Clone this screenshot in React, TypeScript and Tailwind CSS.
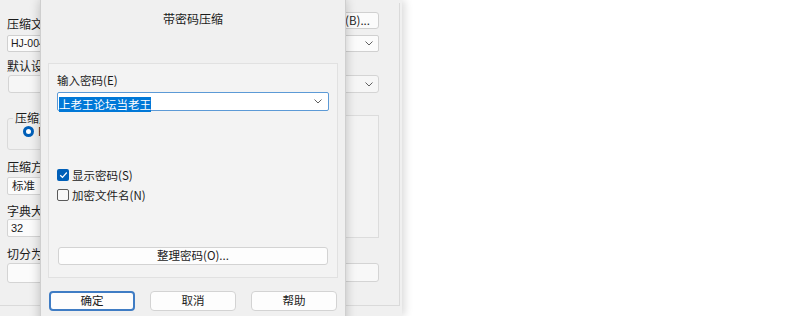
import React from "react";

const Chevron = () => (
  <svg width="8" height="5" viewBox="0 0 8 5" className="shrink-0">
    <path d="M0.5 0.5 L4 4 L7.5 0.5" fill="none" stroke="#606060" strokeWidth="1" />
  </svg>
);

const Check = () => (
  <svg width="9" height="8" viewBox="0 0 9 8">
    <path d="M1.2 4.2 L3.5 6.3 L7.8 1.5" fill="none" stroke="#ffffff" strokeWidth="1.2" />
  </svg>
);

function BackgroundWindow() {
  return (
    <div className="absolute left-0 top-0 w-[402px] h-[316px] bg-[#f0f0f0] shadow-[3px_0_8px_rgba(0,0,0,0.14)]">
      <div className="mt-[3px] w-[400px] h-[303px] border-r border-b border-[#dadada] pl-[7px] pr-[20px] flex flex-col">
        <div className="mt-[9px] h-[17px] flex justify-between items-start">
          <div className="pt-[6px] leading-[12px] text-[12px]">压缩文件名(A)</div>
          <div className="w-[80px] h-[17px] rounded-[3px] border border-[#d0d0d0] bg-[#fbfbfb] flex items-center justify-end pr-[8px] text-[11.5px] leading-none">浏览(B)...</div>
        </div>
        <div className="mt-[6px] h-[17px] border border-[#d0d0d0] bg-[#fbfbfb] rounded-[2px] flex items-center pl-[3px] pr-[5px] text-[10.5px]">
          <span className="flex-1 font-['Liberation_Sans',sans-serif]">HJ-004.rar</span>
          <Chevron />
        </div>
        <div className="mt-[8px] leading-[12px] text-[12px]">默认设置</div>
        <div className="mt-[3px] ml-[1px] h-[18px] border border-[#d4d4d4] bg-[#f6f6f6] rounded-[3px] flex items-center justify-end pr-[5px]">
          <Chevron />
        </div>
        <div className="mt-[19px] flex gap-[14px]">
          <div className="w-[185px] flex flex-col">
            <fieldset className="h-[38px] border border-[#dadada] rounded-[3px]">
              <legend className="ml-[5px] px-[2px] leading-[12px] text-[12px]">压缩文件格式</legend>
              <div className="mt-[2px] pl-[15px] flex items-center gap-[4px] text-[11.5px] leading-[11px]">
                <div className="w-[11px] h-[11px] rounded-full bg-[#005fb8] flex items-center justify-center">
                  <div className="w-[5px] h-[5px] rounded-full bg-white" />
                </div>
                <span>RAR</span>
              </div>
            </fieldset>
            <div className="mt-[11px] leading-[12px] text-[12px]">压缩方式(C)</div>
            <div className="mt-[4px] h-[18px] border border-[#d4d4d4] bg-[#fbfbfb] rounded-[2px] flex items-center pl-[4px] pr-[5px] text-[11.5px]">
              <span className="flex-1">标准</span>
              <Chevron />
            </div>
            <div className="mt-[10px] leading-[12px] text-[12px]">字典大小(I)</div>
            <div className="mt-[2px] h-[18px] border border-[#d4d4d4] bg-[#fbfbfb] rounded-[2px] flex items-center pl-[3px] pr-[5px] text-[11px]">
              <span className="flex-1 font-['Liberation_Sans',sans-serif]">32</span>
              <Chevron />
            </div>
            <div className="mt-[11px] leading-[12px] text-[12px]">切分为分卷(V)，大小</div>
            <div className="mt-[3px] h-[20px] border border-[#d4d4d4] bg-[#fbfbfb] rounded-[3px]" />
          </div>
          <div className="flex-1 flex flex-col">
            <div className="mt-[3px] h-[123px] border border-[#dcdcdc] bg-[#f3f3f3]" />
            <div className="mt-[25px] h-[19px] border border-[#d4d4d4] bg-[#f8f8f8] rounded-[3px]" />
          </div>
        </div>
      </div>
    </div>
  );
}

function PasswordDialog() {
  return (
    <div className="absolute left-[40px] top-0 w-[306px] h-[330px] bg-[#f0f0f0] border-x border-[#cfcfcf] shadow-[0_0_10px_rgba(0,0,0,0.22)] flex flex-col">
      <div className="h-[63px] pt-[13px] text-center leading-[12px] text-[12px]">带密码压缩</div>
      <div className="mx-[7px] w-[290px] h-[215px] border border-[#e1e1e1] bg-[#f3f3f3] px-[8px] flex flex-col">
        <div className="pt-[10px] leading-[12px] text-[11.5px]">输入密码(E)</div>
        <div className="mt-[6px] h-[19px] border border-[#5c9ad6] bg-white rounded-[2px] flex items-center pl-[1px] pr-[6px]">
          <div className="flex-1">
            <span className="bg-[#0078d7] text-white text-[11.5px] leading-[15px] inline-block">上老王论坛当老王</span>
          </div>
          <Chevron />
        </div>
        <div className="mt-[58px] h-[12px] flex items-center gap-[3px] text-[11.5px]">
          <div className="w-[12px] h-[12px] rounded-[2px] bg-[#005fb8] flex items-center justify-center">
            <Check />
          </div>
          <span className="leading-[12px]">显示密码(S)</span>
        </div>
        <div className="mt-[8px] h-[12px] flex items-center gap-[3px] text-[11.5px]">
          <div className="w-[12px] h-[12px] rounded-[2px] border border-[#5a5a5a] bg-[#f8f8f8]" />
          <span className="leading-[12px]">加密文件名(N)</span>
        </div>
        <div className="mt-[46px] mx-[1px] h-[18px] rounded-[3px] border border-[#d3d3d3] bg-[#fdfdfd] flex items-center justify-center text-[11.5px] leading-none">
          整理密码(O)...
        </div>
      </div>
      <div className="mt-[13px] pl-[8px] flex gap-[15px]">
        <div className="w-[86px] h-[20px] rounded-[4px] border-2 border-[#3f7cc4] bg-[#fdfdfd] flex items-center justify-center text-[11.5px] leading-none">确定</div>
        <div className="w-[86px] h-[20px] rounded-[4px] border border-[#d3d3d3] bg-[#fdfdfd] flex items-center justify-center text-[11.5px] leading-none">取消</div>
        <div className="w-[86px] h-[20px] rounded-[4px] border border-[#d3d3d3] bg-[#fdfdfd] flex items-center justify-center text-[11.5px] leading-none">帮助</div>
      </div>
    </div>
  );
}

export default function App() {
  return (
    <div className="relative w-[800px] h-[316px] overflow-hidden bg-white text-[#1b1b1b] font-['Noto_Sans_CJK_SC','Noto_Sans',sans-serif]">
      <BackgroundWindow />
      <PasswordDialog />
    </div>
  );
}
